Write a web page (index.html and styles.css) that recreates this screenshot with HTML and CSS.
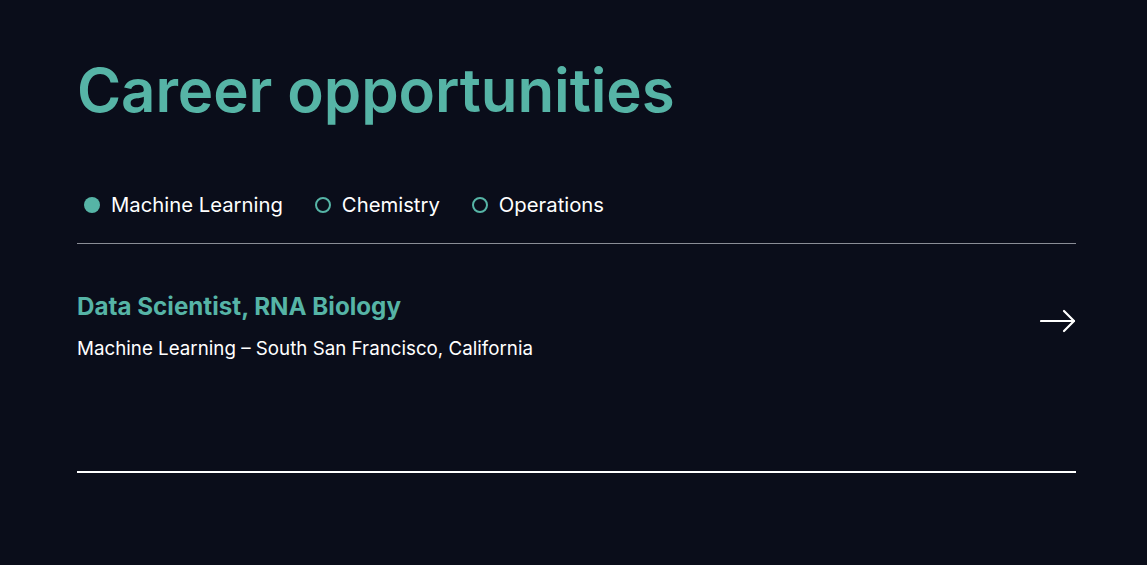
FILE: index.html
```html
<!DOCTYPE html>
<html lang="en">
<head>
<meta charset="utf-8">
<title>Career opportunities</title>
<link rel="stylesheet" href="styles.css">
</head>
<body>
<main class="careers">
  <h1 class="title">Career opportunities</h1>
  <nav class="tabs">
    <button class="tab active"><span class="dot"></span>Machine Learning</button>
    <button class="tab"><span class="dot"></span>Chemistry</button>
    <button class="tab"><span class="dot"></span>Operations</button>
  </nav>
  <ul class="jobs">
    <li class="job">
      <div class="job-text">
        <h2 class="job-title">Data Scientist, RNA Biology</h2>
        <p class="job-meta">Machine Learning – South San Francisco, California</p>
      </div>
      <svg class="arrow" width="36" height="24" viewBox="0 0 36 24" fill="none" stroke="#fff" stroke-width="2.2" stroke-linecap="round" stroke-linejoin="round">
        <path d="M1 12H34"/>
        <path d="M24 2L34 12L24 22"/>
      </svg>
    </li>
  </ul>
</main>
</body>
</html>
```
FILE: styles.css
```css
html, body {
  margin: 0;
  padding: 0;
  background: #0a0d1a;
}
body {
  font-family: Inter, "Noto Sans", sans-serif;
  color: #fff;
}
.careers {
  width: 999px;
  margin-left: 77px;
  padding-top: 54px;
}
.title {
  margin: 0;
  font-size: 60px;
  font-weight: 600;
  line-height: 72px;
  color: #56b4a6;
  letter-spacing: -0.1px;
}
.tabs {
  display: flex;
  gap: 32px;
  margin-top: 66px;
  padding-left: 7px;
  padding-bottom: 25px;
  border-bottom: 1px solid #8a8d96;
}
.tab {
  display: flex;
  align-items: center;
  gap: 11px;
  background: none;
  border: 0;
  padding: 0;
  font-family: inherit;
  font-size: 20.3px;
  line-height: 26px;
  color: #fff;
  cursor: pointer;
}
.dot {
  width: 12px;
  height: 12px;
  border-radius: 50%;
  border: 2px solid #56b4a6;
  box-sizing: content-box;
}
.tab.active .dot {
  width: 16px;
  height: 16px;
  border: 0;
  background: #56b4a6;
}
.jobs {
  list-style: none;
  margin: 0;
  padding: 0;
}
.job {
  display: flex;
  align-items: center;
  justify-content: space-between;
  padding: 48px 0 110px;
  border-bottom: 2px solid #fff;
}
.job-title {
  margin: 0;
  font-size: 24.2px;
  font-weight: 700;
  line-height: 30px;
  color: #56b4a6;
}
.job-meta {
  margin: 15px 0 0;
  font-size: 18.75px;
  line-height: 24px;
  color: #fff;
}
.arrow {
  display: block;
  margin-bottom: 12px;
}
```
